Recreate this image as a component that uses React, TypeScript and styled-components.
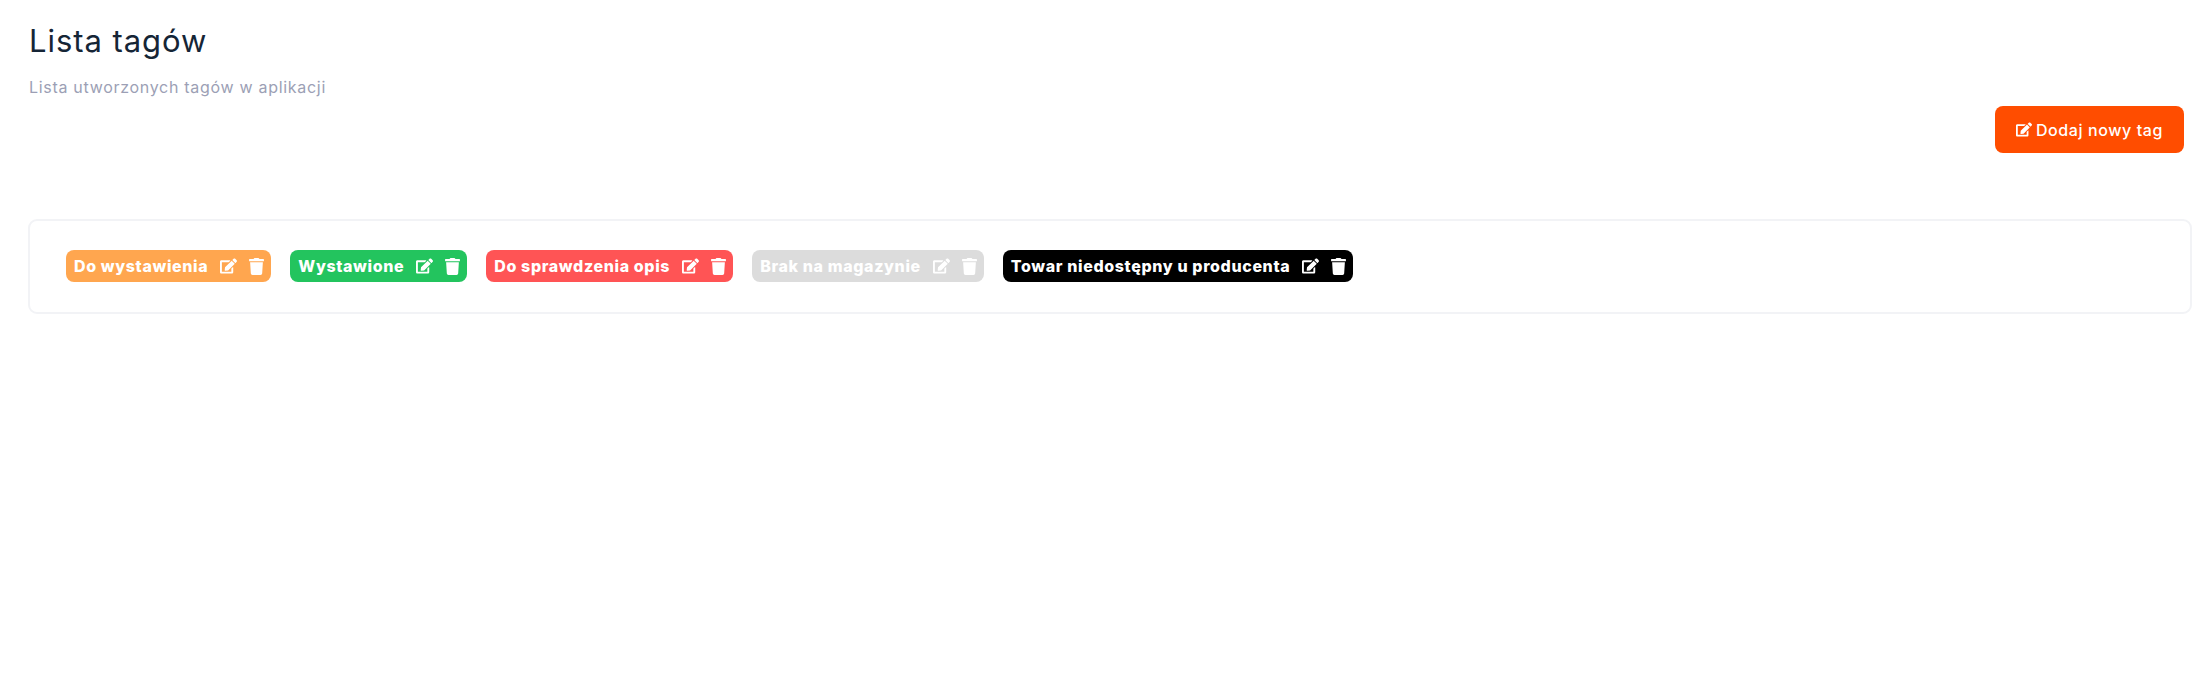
import React from "react";
import styled, { createGlobalStyle } from "styled-components";
import { FaEdit, FaTrash } from "react-icons/fa";

const Global = createGlobalStyle`
  html, body { margin: 0; padding: 0; background: #fff; }
  body { font-family: Inter, "Liberation Sans", sans-serif; }
`;

const Page = styled.div`
  padding: 21px 18px 0 28px;
  box-sizing: border-box;
`;
const Title = styled.h1`
  margin: 0 0 0 1px;
  font-size: 31px;
  line-height: 40px;
  font-weight: 400;
  letter-spacing: 0.95px;
  color: #152536;
`;
const Subtitle = styled.p`
  margin: 16px 0 0 1px;
  font-size: 16px;
  line-height: 20px;
  font-weight: 400;
  letter-spacing: 0.7px;
  color: #9c9fb5;
`;
const Actions = styled.div`
  display: flex;
  justify-content: flex-end;
  padding-right: 8px;
  margin-top: 9px;
`;
const AddButton = styled.button`
  display: flex;
  align-items: center;
  justify-content: center;
  gap: 4px;
  width: 189px;
  height: 47px;
  border: 0;
  border-radius: 8px;
  background: #ff4d00;
  color: #fff;
  font-family: inherit;
  font-size: 16px;
  font-weight: 500;
  letter-spacing: 0.6px;
  svg { width: 16px; height: 15px; }
`;
const Card = styled.section`
  margin-top: 66px;
  height: 95px;
  box-sizing: border-box;
  border: 2px solid #f2f3f6;
  border-radius: 9px;
  padding: 29px 36px;
  display: flex;
  gap: 19px;
  align-items: flex-start;
`;
const Tag = styled.div<{ $bg: string }>`
  display: flex;
  align-items: center;
  height: 32px;
  padding: 0 7px 0 8px;
  border-radius: 8px;
  background: ${(p) => p.$bg};
  color: #fff;
  font-size: 16px;
  font-weight: 800;
  letter-spacing: 0.63px;
  white-space: nowrap;
`;
const TagLabel = styled.span`
  margin-right: 12px;
`;
const TagIcons = styled.span`
  display: flex;
  align-items: center;
  gap: 12px;
  svg { width: 17px; height: 16px; }
`;
const TrashIcon = styled(FaTrash)`
  && { width: 15px; height: 17px; }
`;

const tags = [
  { label: "Do wystawienia", bg: "#ffa64f" },
  { label: "Wystawione", bg: "#23c45e" },
  { label: "Do sprawdzenia opis", bg: "#ff5455" },
  { label: "Brak na magazynie", bg: "#dcdcdc" },
  { label: "Towar niedostępny u producenta", bg: "#000000" },
];

export default function App() {
  return (
    <Page>
      <Global />
      <Title>Lista tagów</Title>
      <Subtitle>Lista utworzonych tagów w aplikacji</Subtitle>
      <Actions>
        <AddButton><FaEdit />Dodaj nowy tag</AddButton>
      </Actions>
      <Card>
        {tags.map((t) => (
          <Tag key={t.label} $bg={t.bg}>
            <TagLabel>{t.label}</TagLabel>
            <TagIcons><FaEdit /><TrashIcon /></TagIcons>
          </Tag>
        ))}
      </Card>
    </Page>
  );
}
